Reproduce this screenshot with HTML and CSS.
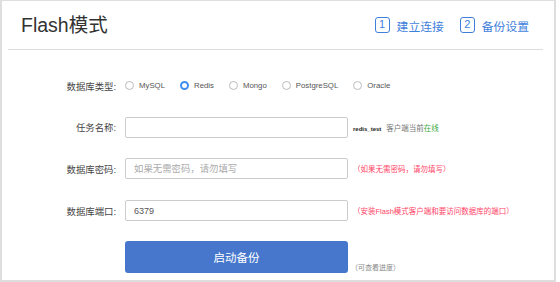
FILE: index.html
```html
<!DOCTYPE html>
<html>
<head>
<meta charset="utf-8" />
<title>Flash模式</title>
<link rel="stylesheet" href="styles.css">
</head>
<body>
<div class="frame">
    <!-- En-tête -->
    <div class="header">
        <h1>Flash模式</h1>
        <div class="steps">
            <span class="step_num">1</span><span class="step_txt">建立连接</span>
            <span class="step_num">2</span><span class="step_txt">备份设置</span>
        </div>
    </div>

    <!-- Formulaire -->
    <div class="form">
        <div class="row">
            <label class="label">数据库类型:</label>
            <div class="radios">
                <span class="radio"><i class="dot"></i>MySQL</span>
                <span class="radio"><i class="dot on"></i>Redis</span>
                <span class="radio"><i class="dot"></i>Mongo</span>
                <span class="radio"><i class="dot"></i>PostgreSQL</span>
                <span class="radio"><i class="dot"></i>Oracle</span>
            </div>
        </div>
        <div class="row">
            <label class="label">任务名称:</label>
            <input class="field" type="text" value="">
            <span class="hint"><b class="client">redis_test</b>客户端当前<em class="online">在线</em></span>
        </div>
        <div class="row">
            <label class="label">数据库密码:</label>
            <input class="field" type="text" placeholder="如果无需密码，请勿填写">
            <span class="hint red">（如果无需密码，请勿填写）</span>
        </div>
        <div class="row">
            <label class="label">数据库端口:</label>
            <input class="field" type="text" value="6379">
            <span class="hint red">（安装Flash模式客户端和要访问数据库的端口）</span>
        </div>
        <div class="row row_btn">
            <button class="start_button">启动备份</button>
            <span class="progress">（可查看进度）</span>
        </div>
    </div>
</div>
</body>
</html>
```

FILE: styles.css
```css
body {
    margin: 0;
    padding: 0;
    font-family: "Liberation Sans", "Noto Sans CJK SC", sans-serif;
    background: white;
}

.frame {
    box-sizing: border-box;
    width: 556px;
    height: 282px;
    border: 2px solid #dedede;
    border-top-width: 1px;
}

.header {
    display: flex;
    align-items: center;
    justify-content: space-between;
    height: 48px;
    margin: 0 11px 0 6px;
    padding: 0 14px 0 13px;
    border-bottom: 1px solid #dddddd;
}

.header h1 {
    margin: 0 0 4px 0;
    font-size: 19.5px;
    font-weight: normal;
    color: #333333;
}

.steps {
    display: flex;
    align-items: center;
    color: #3f7fdc;
    font-size: 11.8px;
}

.step_num {
    box-sizing: border-box;
    width: 15px;
    height: 16px;
    border: 1.5px solid #3f7fdc;
    border-radius: 3px;
    font-size: 11px;
    line-height: 13px;
    text-align: center;
    margin-right: 7px;
}

.step_txt {
    margin-right: 16px;
}

.step_txt:last-child {
    margin-right: 0;
}

.form {
    display: flex;
    flex-direction: column;
    gap: 20.7px;
    padding-top: 25px;
}

.row {
    display: flex;
    align-items: center;
    height: 21px;
}

.label {
    width: 114px;
    margin-right: 7px;
    text-align: right;
    font-size: 9.4px;
    color: #444444;
}

.radios {
    display: flex;
    align-items: center;
    gap: 15px;
    margin-left: 2px;
    font-size: 7.8px;
    color: #555555;
}

.radio {
    display: flex;
    align-items: center;
}

.dot {
    box-sizing: border-box;
    width: 9px;
    height: 9px;
    border: 1px solid #bbbbbb;
    border-radius: 50%;
    margin-right: 5px;
    background: white;
}

.dot.on {
    border: 2.5px solid #3d8ef0;
    background: white;
}

.field {
    box-sizing: border-box;
    width: 223px;
    height: 21px;
    margin: 0 0 0 2px;
    padding: 0 8px;
    border: 1px solid #cccccc;
    border-radius: 2px;
    font-family: inherit;
    font-size: 9px;
    font-weight: normal;
    color: #555555;
    outline: none;
}

.field::placeholder {
    color: #aaaaaa;
    font-size: 9.4px;
}

.hint {
    margin-left: 5px;
    font-size: 7.5px;
    color: #777777;
}

.hint.red {
    color: #ff4466;
}

.client {
    font-size: 6px;
    color: #222222;
    margin-right: 5px;
}

.online {
    font-style: normal;
    color: #44aa44;
}

.row_btn {
    height: 32px;
    align-items: flex-end;
    padding-left: 123px;
    margin-top: -1px;
}

.start_button {
    width: 223px;
    height: 32px;
    border: none;
    border-radius: 3px;
    background: #4677cc;
    color: white;
    font-family: inherit;
    font-size: 11.5px;
}

.progress {
    margin: 0 0 1px 3px;
    font-size: 7px;
    color: #888888;
}
```
